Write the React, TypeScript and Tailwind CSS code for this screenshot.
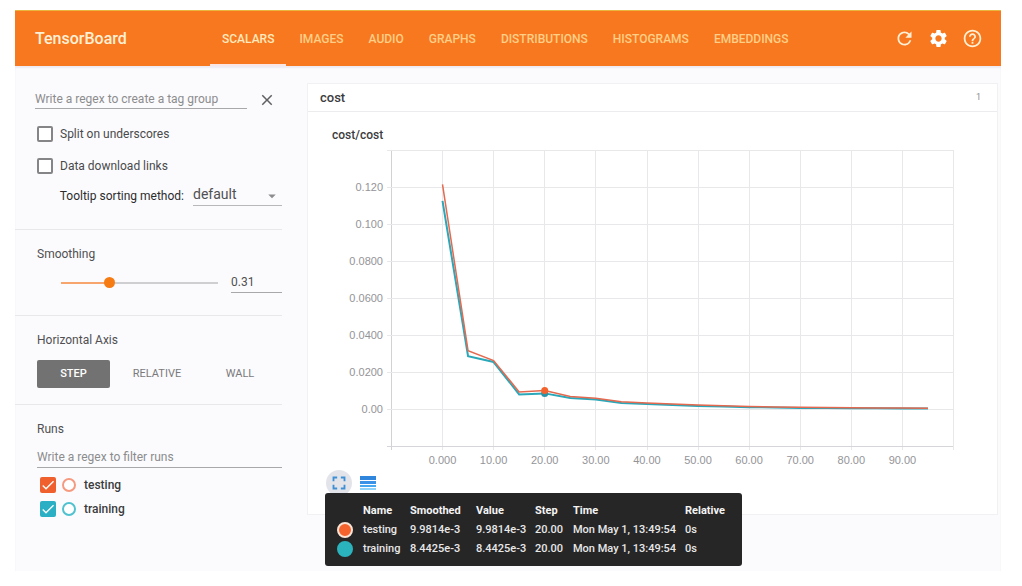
import { useState } from "react";
import { MdHelpOutline, MdRefresh, MdSettings, MdClose, MdFullscreen, MdArrowDropDown, MdCheck } from "react-icons/md";

const tabs = ["SCALARS", "IMAGES", "AUDIO", "GRAPHS", "DISTRIBUTIONS", "HISTOGRAMS", "EMBEDDINGS"];
const axes = [
  { label: "STEP", width: "w-[73px]" },
  { label: "RELATIVE", width: "w-[94px]" },
  { label: "WALL", width: "w-[72px]" },
];

const testing = [0.1214, 0.0315, 0.0262, 0.0092, 0.00998, 0.0068, 0.0058, 0.0039, 0.0033, 0.0027, 0.0021, 0.0017, 0.0014, 0.0011, 0.0009, 0.0008, 0.0007, 0.0006, 0.0005, 0.0004];
const training = [0.1125, 0.0285, 0.0254, 0.0079, 0.00844, 0.006, 0.0051, 0.0032, 0.0027, 0.0021, 0.0016, 0.0013, 0.001, 0.0008, 0.0006, 0.0005, 0.0004, 0.0004, 0.0003, 0.0003];

const xAt = (step: number) => 110.5 + step * 5.11;
const yAt = (value: number) => 264 - value * 1850;
const toPoints = (values: number[]) => values.map((v, i) => `${xAt(i * 5)},${yAt(v)}`).join(" ");

const yTicks = ["0.120", "0.100", "0.0800", "0.0600", "0.0400", "0.0200", "0.00"];
const xTicks = ["0.000", "10.00", "20.00", "30.00", "40.00", "50.00", "60.00", "70.00", "80.00", "90.00"];

function CostChart() {
  const columns = Array.from({ length: 12 }, (_, i) => Math.round(59 + i * 51.1) + 0.5);
  const rows = Array.from({ length: 9 }, (_, i) => 5.5 + i * 37);
  return (
    <svg viewBox="0 0 641 325" className="block w-full" role="img" aria-label="cost/cost">
      <g strokeWidth="1">
        {columns.map((x, i) => (
          <line key={x} x1={x} x2={x} y1="5" y2="305" stroke={i === 0 ? "#d2d2d6" : "#e8e8eb"} />
        ))}
        {rows.map((y, i) => (
          <line key={y} x1="55" x2="621" y1={y} y2={y} stroke={i === 8 ? "#d6d6da" : "#e8e8eb"} />
        ))}
      </g>
      <g className="font-['Liberation_Sans',sans-serif] text-[11px]" fill="#949498">
        {yTicks.map((t, i) => (
          <text key={t} x="51" y={46 + i * 37} textAnchor="end">{t}</text>
        ))}
        {xTicks.map((t, i) => (
          <text key={t} x={xAt(i * 10)} y="319" textAnchor="middle">{t}</text>
        ))}
      </g>
      <polyline points={toPoints(training)} fill="none" stroke="#2aa7b8" strokeWidth="2" />
      <polyline points={toPoints(testing)} fill="none" stroke="#e4694f" strokeWidth="1.5" />
      <circle cx={xAt(20)} cy={yAt(0.00844)} r="3.5" fill="#2a93a8" />
      <circle cx={xAt(20)} cy={yAt(0.00998)} r="3.5" fill="#f4632d" />
    </svg>
  );
}

function PlainCheckbox({ label }: { label: string }) {
  return (
    <label className="flex h-5 items-center gap-[7px] pl-[2px] text-[12px] text-[#4a4a4c]">
      <input
        type="checkbox"
        className="size-4 appearance-none rounded-[2px] border-2 border-[#858587] bg-white checked:bg-[#858587]"
      />
      {label}
    </label>
  );
}

function RunRow({ name, box, ring }: { name: string; box: string; ring: string }) {
  const [on, setOn] = useState(true);
  return (
    <label className="flex h-5 items-center pl-[3px] text-[12px] font-medium text-[#3c3c3e]">
      <span className="grid size-4">
        <input
          type="checkbox"
          checked={on}
          onChange={() => setOn(!on)}
          className={`col-start-1 row-start-1 size-4 appearance-none rounded-[2px] ${box}`}
        />
        {on && <MdCheck className="pointer-events-none col-start-1 row-start-1 size-4 text-white" />}
      </span>
      <span className={`ml-[6px] size-[14px] rounded-full border-2 bg-white ${ring}`} />
      <span className="ml-2">{name}</span>
    </label>
  );
}

function Sidebar() {
  const [smoothing, setSmoothing] = useState(0.31);
  const [axis, setAxis] = useState("STEP");
  const section = "border-b border-[#e8e8ea] pl-[22px] pt-[14px]";
  const heading = "h-5 text-[12px] leading-5 text-[#505052]";
  const field = "border-b border-[#a8a8aa] bg-transparent text-[12px] text-[#505052] outline-none placeholder:text-[#8c8c8e]";
  const stop = `calc(5px + (100% - 10px) * ${smoothing})`;
  return (
    <aside className="w-[267px] shrink-0">
      <section className="border-b border-[#e8e8ea] pb-[23px] pl-5 pt-6">
        <div className="flex items-center">
          <input aria-label="Tag group regex" placeholder="Write a regex to create a tag group" className={`h-[19px] w-[212px] ${field}`} />
          <button aria-label="Clear" className="ml-[11px] text-[#606062]">
            <MdClose className="size-[18px]" />
          </button>
        </div>
        <div className="mt-[15px] flex flex-col gap-3">
          <PlainCheckbox label="Split on underscores" />
          <PlainCheckbox label="Data download links" />
        </div>
        <div className="mt-[10px] flex items-center justify-end">
          <label htmlFor="sort" className="text-[12px] text-[#2c2c2e]">Tooltip sorting method:</label>
          <span className="ml-[9px] grid w-[89px] items-center border-b border-[#b8b8ba]">
            <select id="sort" className="col-start-1 row-start-1 h-[19px] appearance-none pb-[3px] text-[14px] leading-4 text-[#505052] outline-none">
              <option>default</option>
              <option>descending</option>
              <option>ascending</option>
              <option>nearest</option>
            </select>
            <MdArrowDropDown className="pointer-events-none col-start-1 row-start-1 mr-[1px] size-[18px] justify-self-end text-[#8c8c8e]" />
          </span>
        </div>
      </section>

      <section className={`${section} pb-[22px]`}>
        <h2 className={heading}>Smoothing</h2>
        <div className="mt-2 flex items-center justify-between pl-[19px]">
          <input
            type="range"
            aria-label="Smoothing"
            min="0"
            max="1"
            step="0.01"
            value={smoothing}
            onChange={(e) => setSmoothing(Number(e.target.value))}
            className="h-3 w-[167px] appearance-none bg-center bg-no-repeat [&::-webkit-slider-thumb]:size-[11px] [&::-webkit-slider-thumb]:appearance-none [&::-webkit-slider-thumb]:rounded-full [&::-webkit-slider-thumb]:bg-[#f77b13]"
            style={{
              backgroundImage: `linear-gradient(to right, transparent 5px, #f7a56c 5px, #f7a56c ${stop}, #cfcfd1 ${stop}, #cfcfd1 calc(100% - 5px), transparent calc(100% - 5px))`,
              backgroundSize: "100% 2px",
            }}
          />
          <input
            aria-label="Smoothing value"
            value={smoothing}
            onChange={(e) => setSmoothing(Number(e.target.value) || 0)}
            className={`h-[21px] w-[51px] ${field}`}
          />
        </div>
      </section>

      <section className={`${section} pb-4`}>
        <h2 className={heading}>Horizontal Axis</h2>
        <div className="mt-[10px] flex">
          {axes.map((a) => (
            <button
              key={a.label}
              onClick={() => setAxis(a.label)}
              className={`h-7 rounded-[2px] text-[11px] ${a.width} ${axis === a.label ? "bg-[#727272] font-medium text-white" : "text-[#7a7a7c]"}`}
            >
              {a.label}
            </button>
          ))}
        </div>
      </section>

      <section className="pl-[22px] pt-[14px]">
        <h2 className={heading}>Runs</h2>
        <input aria-label="Filter runs regex" placeholder="Write a regex to filter runs" className={`mt-2 block h-[21px] w-full ${field}`} />
        <div className="mt-[7px] flex flex-col gap-1">
          <RunRow name="testing" box="bg-[#f0602f]" ring="border-[#f59a7f]" />
          <RunRow name="training" box="bg-[#2bafc4]" ring="border-[#4fc1cf]" />
        </div>
      </section>
    </aside>
  );
}

const hovered = [
  { name: "testing", value: "9.9814e-3", dot: "bg-[#f4632d] border-[#fbe3d6]" },
  { name: "training", value: "8.4425e-3", dot: "bg-[#2bb3bd] border-[#2bb3bd]" },
];

function ChartTooltip() {
  return (
    <div className="absolute left-[17px] top-full z-10 rounded-[3px] bg-[#262627] py-2 pl-3 text-[11px] text-[#e8e8e8]">
      <table className="w-[405px] table-fixed whitespace-nowrap text-left leading-[19px]">
        <colgroup>
          <col className="w-[26px]" />
          <col className="w-[47px]" />
          <col className="w-[66px]" />
          <col className="w-[59px]" />
          <col className="w-[38px]" />
          <col className="w-[112px]" />
          <col />
        </colgroup>
        <thead>
          <tr className="font-bold text-[#f4f4f4]">
            <td />
            <th>Name</th>
            <th>Smoothed</th>
            <th>Value</th>
            <th>Step</th>
            <th>Time</th>
            <th>Relative</th>
          </tr>
        </thead>
        <tbody className="font-medium">
          {hovered.map((r) => (
            <tr key={r.name}>
              <td><span className={`block size-4 rounded-full border-2 ${r.dot}`} /></td>
              <td>{r.name}</td>
              <td>{r.value}</td>
              <td>{r.value}</td>
              <td>20.00</td>
              <td>Mon May 1, 13:49:54</td>
              <td>0s</td>
            </tr>
          ))}
        </tbody>
      </table>
    </div>
  );
}

export default function App() {
  const [tab, setTab] = useState("SCALARS");
  return (
    <div className="min-h-screen bg-white pl-[15px] pr-[21px] pt-[10px] font-[Roboto,sans-serif]">
      <header className="flex h-14 items-center border-t border-[#e9b53c] bg-[#f8781f] pl-5 pr-[18px]">
        <h1 className="w-[175px] text-[16px] font-medium text-[#fff1d6]">TensorBoard</h1>
        <nav className="flex h-full gap-[1px]">
          {tabs.map((t) => (
            <button
              key={t}
              onClick={() => setTab(t)}
              className={`border-b-2 px-3 pt-[3px] text-[12px] font-medium ${tab === t ? "border-[#fbe6e6] text-[#ffe9bd]" : "border-transparent text-[#ffcf87]"}`}
            >
              {t}
            </button>
          ))}
        </nav>
        <div className="ml-auto flex gap-[13px] text-[#fff0d4]">
          <button aria-label="Reload"><MdRefresh className="size-[21px]" /></button>
          <button aria-label="Settings"><MdSettings className="size-[21px] text-white" /></button>
          <button aria-label="Help"><MdHelpOutline className="size-[21px]" /></button>
        </div>
      </header>

      <div className="flex bg-[#fbfbfd] shadow-[inset_0_2px_2px_#eeeaf3]">
        <Sidebar />
        <main className="min-w-0 flex-1 pb-14 pl-[25px] pr-[3px] pt-[17px]">
          <div className="border border-[#f1f1f4] bg-white">
            <div className="flex h-[28px] items-center justify-between border-b border-[#ececef] pl-3 pr-4">
              <h2 className="text-[13px] font-medium text-[#3c3c3e]">cost</h2>
              <span className="text-[9px] text-[#8c8c8e]">1</span>
            </div>
            <div className="px-6 pt-[13px]">
              <h3 className="h-5 text-[12px] font-medium leading-5 text-[#3c3c3e]">cost/cost</h3>
              <CostChart />
            </div>
            <div className="relative mb-[21px] flex h-[23px] items-start gap-2 pl-[18px]">
              <button aria-label="Toggle full size" className="flex size-[26px] items-center justify-center rounded-full bg-[#e3e4ea] text-[#3f8fd4]">
                <MdFullscreen className="size-[22px]" />
              </button>
              <button aria-label="Toggle log scale" className="flex h-[26px] w-[18px] items-center">
                <svg viewBox="0 0 16 14" className="h-[14px] w-4">
                  <rect width="16" height="4" fill="#2f86dc" />
                  <rect y="5" width="16" height="3" fill="#3a93e6" />
                  <rect y="9" width="16" height="2" fill="#45a8f0" />
                  <rect y="12" width="16" height="2" fill="#8fd3f8" />
                </svg>
              </button>
              <ChartTooltip />
            </div>
          </div>
        </main>
      </div>
    </div>
  );
}
